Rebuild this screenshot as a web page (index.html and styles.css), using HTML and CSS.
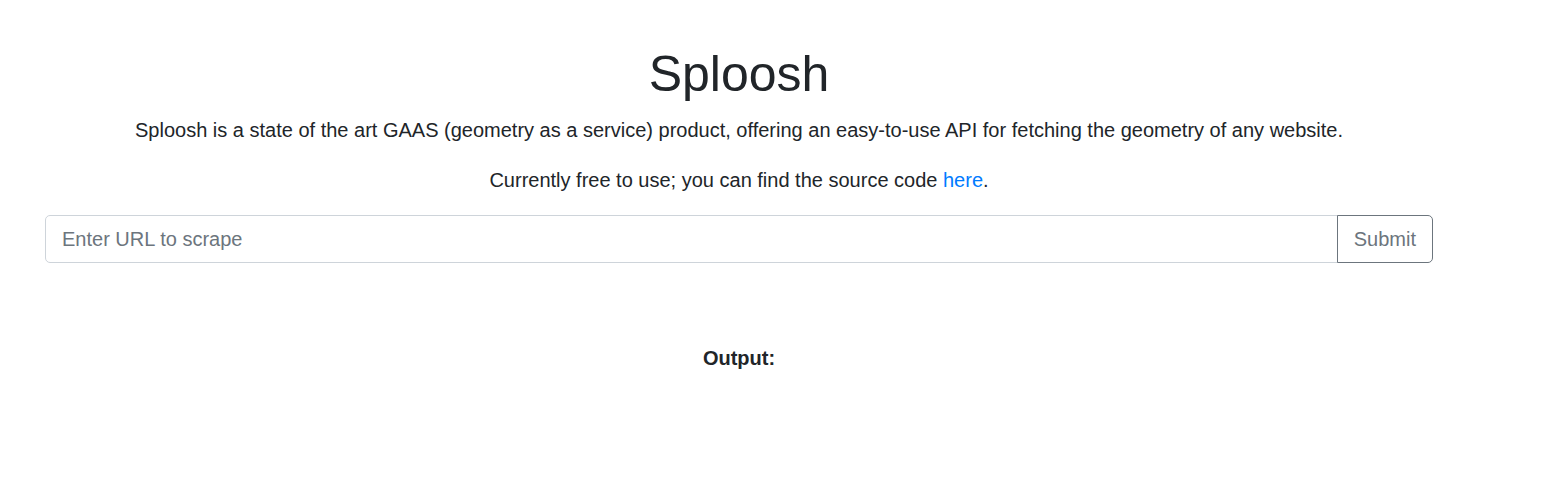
FILE: index.html
```html
<!DOCTYPE html>
<html>
<head>
<meta charset="utf-8">
<link rel="stylesheet" href="styles.css">
</head>
<body>
<div class="page">
  <h1 class="title">Sploosh</h1>
  <p class="lead">Sploosh is a state of the art GAAS (geometry as a service) product, offering an easy-to-use API for fetching the geometry of any website.</p>
  <p class="lead">Currently free to use; you can find the source code <a href="#">here</a>.</p>
  <div class="input-group">
    <input class="url" type="text" placeholder="Enter URL to scrape">
    <button class="submit">Submit</button>
  </div>
  <div class="output">Output:</div>
</div>
</body>
</html>
```
FILE: styles.css
```css
* { box-sizing: border-box; }
body {
  margin: 0;
  font-family: "Liberation Sans", Arial, sans-serif;
  color: #212529;
  background: #fff;
}
.page {
  margin-left: 45px;
  width: 1388px;
  text-align: center;
  padding-top: 44px;
}
.title {
  font-size: 50px;
  font-weight: 400;
  line-height: 1.2;
  margin: 0 0 11px;
}
.lead {
  font-size: 20px;
  line-height: 1.5;
  margin: 0 0 20px;
}
.lead a { color: #007bff; text-decoration: none; }
.input-group {
  display: flex;
  height: 48px;
}
.url {
  flex: 1;
  height: 48px;
  border: 1px solid #ced4da;
  border-radius: 5px 0 0 5px;
  padding: 8px 16px;
  font-size: 20px;
  font-family: inherit;
  color: #495057;
  outline: none;
}
.url::placeholder { color: #6c757d; }
.submit {
  height: 48px;
  border: 1px solid #6c757d;
  border-radius: 0 5px 5px 0;
  margin-left: -1px;
  background: #fff;
  color: #6c757d;
  font-size: 20px;
  font-family: inherit;
  padding: 8px 16px;
}
.output {
  margin-top: 80px;
  font-weight: 700;
  font-size: 20px;
  line-height: 1.5;
}
```
